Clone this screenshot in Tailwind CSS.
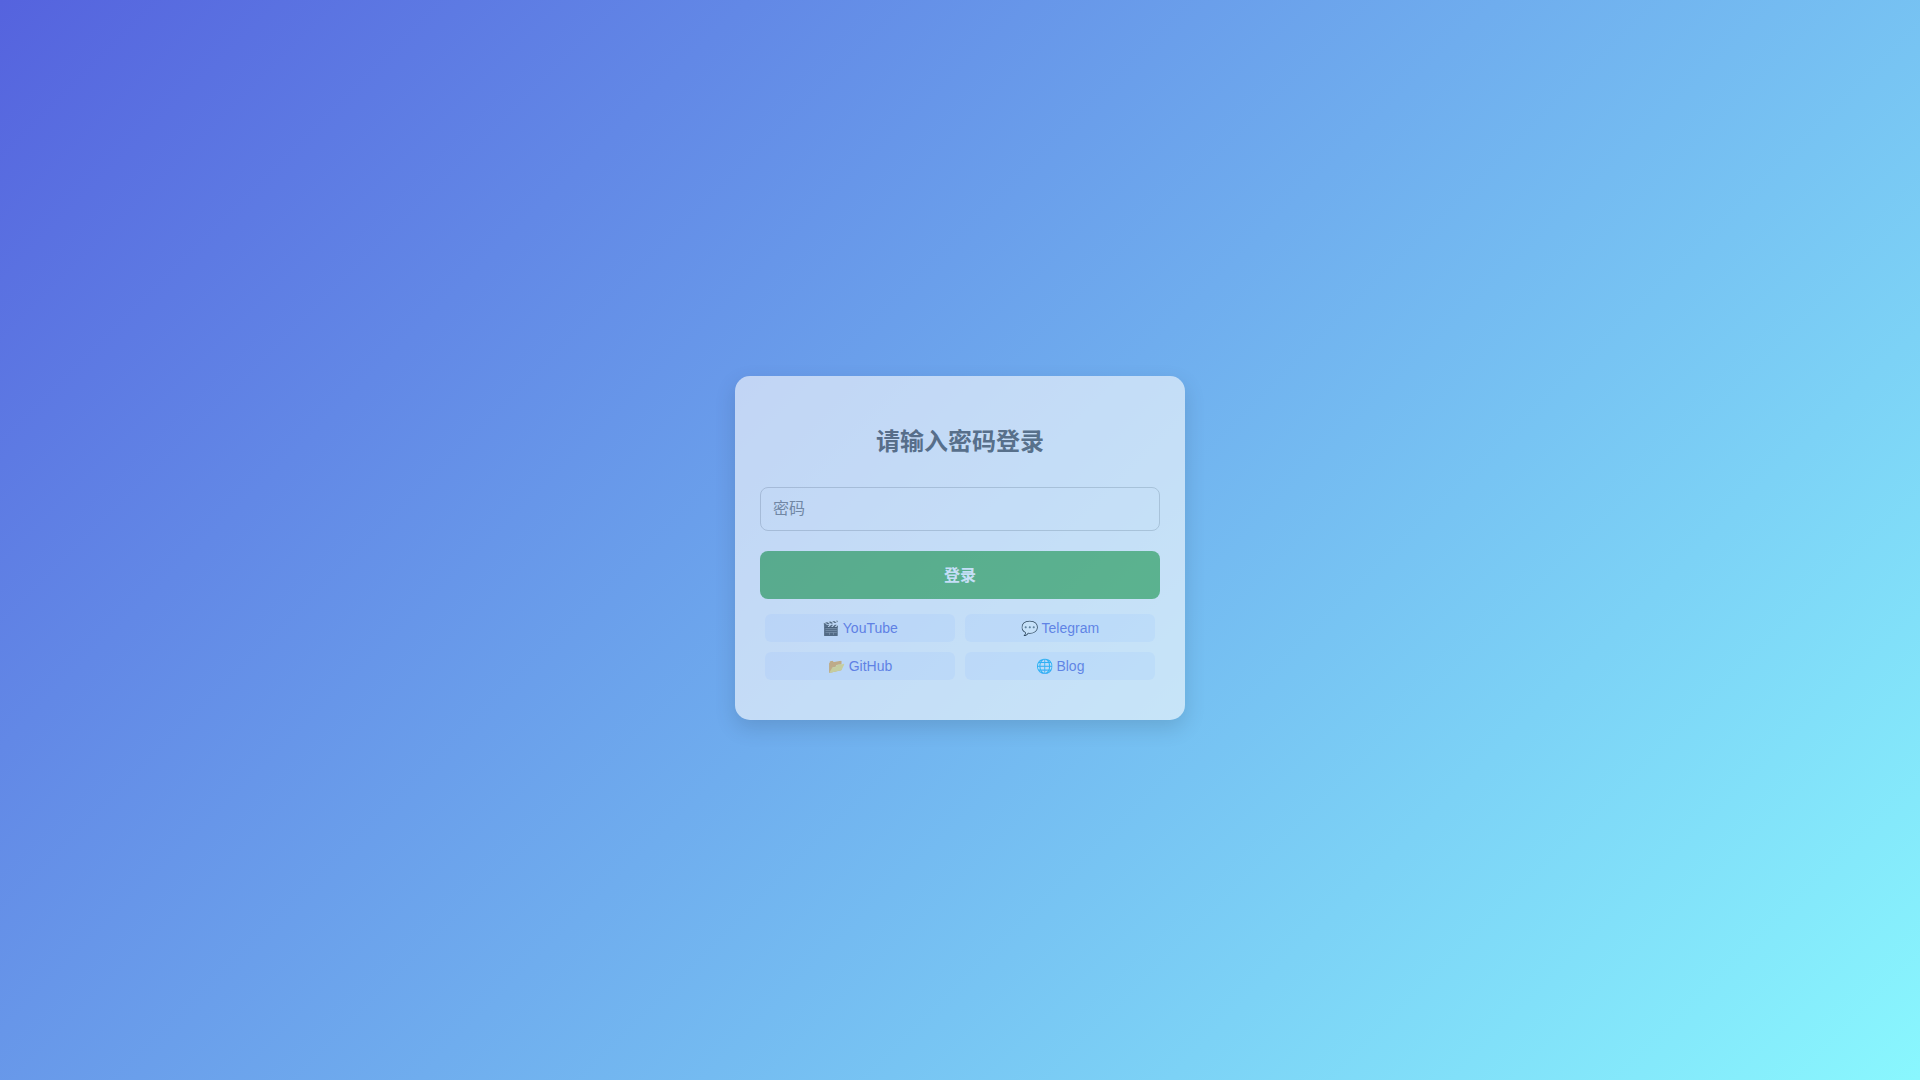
<!DOCTYPE html>
<html lang="zh-CN">
<head>
<meta charset="utf-8">
<meta name="viewport" content="width=device-width, initial-scale=1">
<title>请输入密码登录</title>
<script src="https://cdn.jsdelivr.net/npm/@tailwindcss/browser@4"></script>
</head>
<body class="flex min-h-screen items-center justify-center bg-[linear-gradient(135deg,#5563DE,#89F7FE)] pt-4 font-['Liberation_Sans','Noto_Sans_CJK_SC',sans-serif] text-[#4a4a4a]">
<main class="w-full max-w-[450px] rounded-[15px] bg-[#fdfdfd] px-[25px] py-10 opacity-60 shadow-[0_8px_20px_rgba(0,0,0,0.2)]">
  <h1 class="mb-5 text-center text-2xl leading-[51px] font-bold">请输入密码登录</h1>
  <form class="flex flex-col gap-5">
    <input type="password" aria-label="密码" placeholder="密码" class="h-11 w-full rounded-lg border border-[#ccc] px-3 text-base placeholder:text-[#757575]">
    <button type="button" class="h-12 w-full rounded-lg bg-[#4CAF50] pt-0.5 text-base font-bold text-white">登录</button>
  </form>
  <nav class="mt-[15px] grid grid-cols-2 gap-[10px] px-[5px] text-center text-sm leading-7 text-[#5563DE]">
    <a href="#" class="h-7 rounded-md bg-[#eef3ff]">🎬 YouTube</a>
    <a href="#" class="h-7 rounded-md bg-[#eef3ff]">💬 Telegram</a>
    <a href="#" class="h-7 rounded-md bg-[#eef3ff]">📂 GitHub</a>
    <a href="#" class="h-7 rounded-md bg-[#eef3ff]">🌐 Blog</a>
  </nav>
</main>
</body>
</html>
